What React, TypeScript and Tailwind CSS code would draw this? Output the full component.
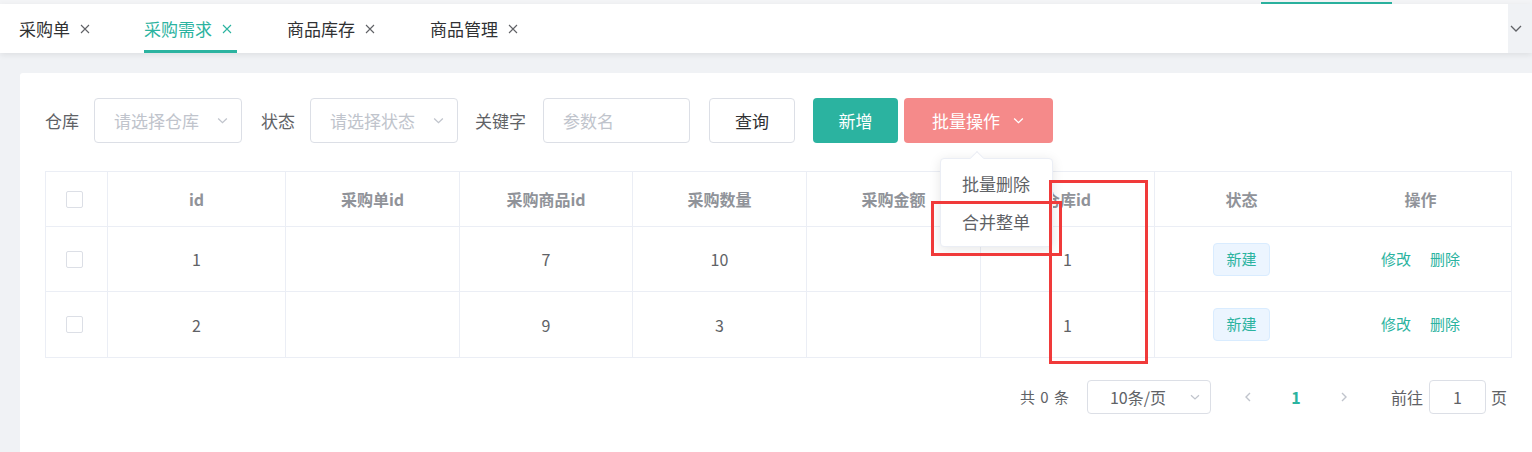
import React from 'react'

const font = { fontFamily: '"Noto Sans CJK SC", "Noto Sans", sans-serif' }

const Chevron: React.FC<{ className?: string }> = ({ className }) => (
    <svg viewBox="0 0 12 12" className={className} fill="none" stroke="currentColor" strokeWidth="1.2">
        <path d="M2 4.2 L6 8 L10 4.2" />
    </svg>
)

const Close: React.FC<{ className?: string }> = ({ className }) => (
    <svg viewBox="0 0 10 10" className={className} fill="none" stroke="currentColor" strokeWidth="1.1">
        <path d="M1 1 L9 9 M9 1 L1 9" />
    </svg>
)

const Checkbox: React.FC = () => (
    <div className="size-[17px] rounded-[2px] border border-[#dcdfe6] bg-white mr-[4px]"></div>
)

const cols = [62, 178, 174, 173, 174, 174, 174, 173, 185]
const heads = ['', 'id', '采购单id', '采购商品id', '采购数量', '采购金额', '仓库id', '状态', '操作']
const rows = [
    { id: '1', goods: '7', count: '10', store: '1' },
    { id: '2', goods: '9', count: '3', store: '1' },
]

const tabs = [
    { name: '采购单', active: false, w: 'w-[125px]' },
    { name: '采购需求', active: true, w: 'w-[143px]' },
    { name: '商品库存', active: false, w: 'w-[143px]' },
    { name: '商品管理', active: false, w: 'w-[120px]' },
]

const Cell: React.FC<{ i: number; children?: React.ReactNode }> = ({ i, children }) => (
    <div
        className={`flex items-center justify-center shrink-0 ${i < 7 ? 'border-r border-[#ebeef5]' : ''}`}
        style={{ width: cols[i] }}
    >
        {children}
    </div>
)

const App: React.FC = () => {
    return (
        <div className="w-[1532px] h-[452px] overflow-hidden bg-[#f0f2f5] relative" style={font}>
            {/* top strip */}
            <div className="h-[4px] bg-[#f3f4f6] flex">
                <div className="ml-[1261px] w-[131px] h-[2px] mt-[2px] bg-[#2bb3a0]"></div>
            </div>

            {/* tabs */}
            <div className="h-[49px] bg-white flex shadow-[0_2px_6px_rgba(0,0,0,0.08)] relative z-10">
                <div className="flex flex-1 pl-[19px]">
                    {tabs.map((t) => (
                        <div key={t.name} className={`${t.w} h-full relative flex items-center`}>
                            <div className="flex items-center gap-[10px]">
                                <span className={`text-[17px] ${t.active ? 'text-[#2bb3a0]' : 'text-[#303133]'}`}>{t.name}</span>
                                <Close className={`size-[10px] ${t.active ? 'text-[#2bb3a0]' : 'text-[#606266]'}`} />
                            </div>
                            {t.active && <div className="absolute left-0 bottom-0 w-[93px] h-[3px] bg-[#2bb3a0]"></div>}
                        </div>
                    ))}
                </div>
                <div className="w-[24px] h-full bg-[#f0f2f5] flex items-center overflow-hidden">
                    <svg viewBox="0 0 12 12" className="size-[12px] ml-[2px] text-[#606266]" fill="none" stroke="currentColor" strokeWidth="1.3">
                        <path d="M1 3 L6 8 L11 3" />
                    </svg>
                </div>
            </div>

            {/* content */}
            <div className="pl-[20px] pt-[20px]">
                <div className="bg-white h-[400px] rounded-tl-[3px] pl-[25px] pt-[25px] pr-[20px]">
                    {/* filters */}
                    <div className="flex items-center h-[45px] text-[17px] text-[#606266]">
                        <span className="w-[49px]">仓库</span>
                        <div className="w-[148px] h-[45px] border border-[#dcdfe6] rounded-[4px] flex items-center justify-between pl-[19px] pr-[12px]">
                            <span className="text-[#c0c4cc]">请选择仓库</span>
                            <Chevron className="size-[13px] text-[#c0c4cc]" />
                        </div>
                        <span className="ml-[19px] w-[49px]">状态</span>
                        <div className="w-[148px] h-[45px] border border-[#dcdfe6] rounded-[4px] flex items-center justify-between pl-[19px] pr-[12px]">
                            <span className="text-[#c0c4cc]">请选择状态</span>
                            <Chevron className="size-[13px] text-[#c0c4cc]" />
                        </div>
                        <span className="ml-[17px] w-[68px]">关键字</span>
                        <div className="w-[147px] h-[45px] border border-[#dcdfe6] rounded-[4px] flex items-center pl-[19px]">
                            <span className="text-[#c0c4cc]">参数名</span>
                        </div>
                        <div className="ml-[19px] w-[86px] h-[45px] border border-[#dcdfe6] rounded-[4px] flex items-center justify-center text-[#303133]">
                            查询
                        </div>
                        <div className="ml-[18px] w-[85px] h-[45px] rounded-[4px] bg-[#2bb3a0] flex items-center justify-center text-white">
                            新增
                        </div>
                        <div className="ml-[6px] w-[149px] h-[45px] rounded-[4px] bg-[#f58a8a] flex items-center justify-center gap-[12px] text-white relative">
                            <span>批量操作</span>
                            <Chevron className="size-[13px] text-white" />
                            {/* dropdown */}
                            <div className="absolute right-0 top-[60px] w-[113px] h-[89px] bg-white border border-[#ebeef5] rounded-[4px] shadow-[0_2px_12px_rgba(0,0,0,0.1)] z-20 flex flex-col justify-center text-[17px] text-[#606266] pl-[21px]">
                                <div className="absolute -top-[6px] left-[31px] size-[10px] bg-white border-l border-t border-[#ebeef5] rotate-45"></div>
                                <div className="h-[38px] flex items-center">批量删除</div>
                                <div className="h-[38px] flex items-center">合并整单</div>
                            </div>
                        </div>
                    </div>

                    {/* table */}
                    <div className="mt-[28px] w-[1467px] border border-[#ebeef5] text-[16px]">
                        <div className="flex h-[55px] border-b border-[#ebeef5] font-bold text-[#909399]">
                            {heads.map((h, i) => (
                                <Cell key={i} i={i}>
                                    {i === 0 ? <Checkbox /> : h}
                                </Cell>
                            ))}
                        </div>
                        {rows.map((r, ri) => (
                            <div key={r.id} className={`flex h-[65px] text-[#606266] ${ri === 0 ? 'border-b border-[#ebeef5]' : ''}`}>
                                <Cell i={0}><Checkbox /></Cell>
                                <Cell i={1}>{r.id}</Cell>
                                <Cell i={2}></Cell>
                                <Cell i={3}>{r.goods}</Cell>
                                <Cell i={4}>{r.count}</Cell>
                                <Cell i={5}></Cell>
                                <Cell i={6}>{r.store}</Cell>
                                <Cell i={7}>
                                    <div className="w-[57px] h-[33px] rounded-[4px] bg-[#ecf5ff] border border-[#d9ecff] flex items-center justify-center text-[15px] text-[#2bb3a0]">
                                        新建
                                    </div>
                                </Cell>
                                <Cell i={8}>
                                    <div className="flex gap-[19px] text-[15px] text-[#2bb3a0]">
                                        <span>修改</span>
                                        <span>删除</span>
                                    </div>
                                </Cell>
                            </div>
                        ))}
                    </div>

                    {/* pagination */}
                    <div className="mt-[22px] w-[1467px] flex items-center justify-end text-[15px] text-[#606266] h-[34px]">
                        <span className="mr-[17px] tracking-[1px]">共 0 条</span>
                        <div className="w-[124px] h-[34px] border border-[#dcdfe6] rounded-[4px] flex items-center justify-between pl-[22px] pr-[9px] text-[16px]">
                            <span>10条/页</span>
                            <Chevron className="size-[12px] text-[#c0c4cc]" />
                        </div>
                        <div className="ml-[31px] flex items-center">
                            <svg viewBox="0 0 12 12" className="size-[12px] text-[#c0c4cc]" fill="none" stroke="currentColor" strokeWidth="1.4">
                                <path d="M8 2 L4 6 L8 10" />
                            </svg>
                            <span className="w-[84px] text-center font-bold text-[#2bb3a0] text-[16px]">1</span>
                            <svg viewBox="0 0 12 12" className="size-[12px] text-[#c0c4cc]" fill="none" stroke="currentColor" strokeWidth="1.4">
                                <path d="M4 2 L8 6 L4 10" />
                            </svg>
                        </div>
                        <span className="ml-[41px] text-[16px]">前往</span>
                        <div className="ml-[6px] w-[57px] h-[34px] border border-[#dcdfe6] rounded-[4px] flex items-center justify-center text-[16px]">1</div>
                        <span className="ml-[5px] mr-[5px] text-[16px]">页</span>
                    </div>
                </div>
            </div>

            {/* annotation boxes */}
            <div className="absolute left-[1049px] top-[180px] w-[99px] h-[184px] border-[3px] border-[#f03a3a] z-30"></div>
            <div className="absolute left-[931px] top-[201px] w-[131px] h-[55px] border-[3px] border-[#f03a3a] z-30"></div>
        </div>
    )
}

export default App
